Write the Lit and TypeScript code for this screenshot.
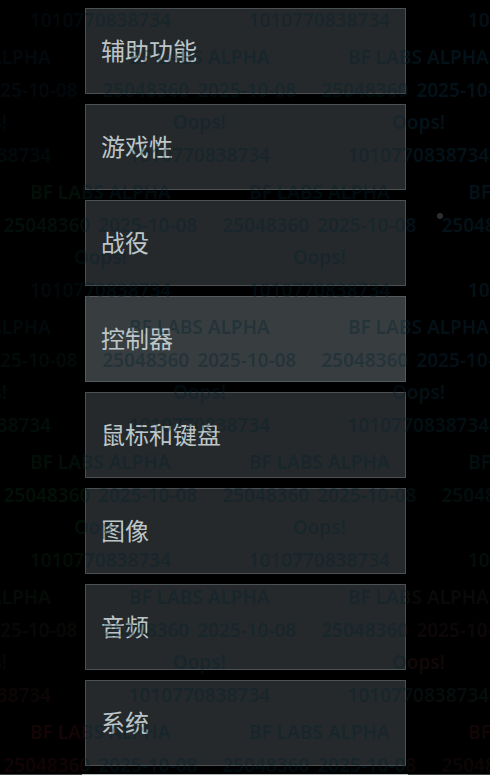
import { LitElement, html, css } from "lit";
import { customElement } from "lit/decorators.js";

const ITEMS = ["辅助功能", "游戏性", "战役", "控制器", "鼠标和键盘", "图像", "音频", "系统"];
const ACTIVE = "控制器";
// Watermark rows: alternate between two horizontal offsets, four tiles each.
const ROWS = [0, 1, 2, 3, 4, 5, 6, 7];

@customElement("app-root")
export class AppRoot extends LitElement {
  static styles = css`
    :host {
      display: block;
      position: relative;
      width: 490px;
      height: 775px;
      overflow: hidden;
      background: #000;
      font-family: "Noto Sans", "Noto Sans CJK SC", sans-serif;
    }
    .menu {
      display: flex;
      flex-direction: column;
      gap: 10px;
      width: 321px;
      margin-left: 85px;
      padding-top: 8px;
    }
    .item {
      box-sizing: border-box;
      height: 86px;
      display: flex;
      align-items: center;
      padding: 0 0 3px 15px;
      background: #25292b;
      border: 1px solid #4b5052;
      color: #bcc6c9;
      font-family: "Noto Sans CJK SC", "Noto Sans", sans-serif;
      font-size: 24px;
    }
    .item.active {
      background: #383d40;
      border-color: #555a5c;
    }
    .rule {
      height: 1px;
      margin-top: 8px;
      background: linear-gradient(
        to right,
        #3c3f40 0 82px,
        #aeb8b8 82px 408px,
        #3c3f40 408px
      );
    }
    .watermark {
      position: absolute;
      inset: 0;
      overflow: hidden;
      pointer-events: none;
      color: transparent;
      filter: blur(0.4px);
      -webkit-background-clip: text;
      background-clip: text;
      background-repeat: no-repeat;
      background-image:
        linear-gradient(
          to bottom,
          #02080b 0,
          #02080b 150px,
          #021007 195px,
          #030e0a 230px,
          #02080b 295px,
          #021007 490px,
          #021005 530px,
          #030c07 570px,
          #0b0505 690px,
          #150406 730px,
          #100305 775px
        ),
        linear-gradient(rgba(0, 35, 45, 0.35), rgba(0, 35, 45, 0.35)),
        linear-gradient(
          to bottom,
          #030e17 0,
          #031219 60px,
          #031017 360px,
          #020e0d 495px,
          #030e0a 560px,
          #0d0707 628px,
          #130707 660px,
          #040e0d 695px,
          #120505 730px,
          #0b0505 775px
        );
      background-size: 85px 100%, 321px 100%, 84px 100%;
      background-position: 0 0, 85px 0, 406px 0;
      font-size: 19px;
      font-weight: 600;
      line-height: 32.5px;
      white-space: nowrap;
      text-align: center;
    }
    .rows {
      display: flex;
      flex-direction: column;
      gap: 5px;
      margin-top: -94px;
    }
    .row {
      display: flex;
      margin-left: -228px;
    }
    .row.shift {
      margin-left: -129px;
    }
    .tile {
      flex: none;
      width: 219px;
    }
    .tile div {
      height: 32.5px;
    }
    .tile .date {
      word-spacing: 3px;
    }
    .speck {
      position: absolute;
      left: 437px;
      top: 213px;
      width: 6px;
      height: 6px;
      border-radius: 50%;
      background: #2c2f30;
    }
  `;

  private tile() {
    return html`<div class="tile">
      <div>BF LABS ALPHA</div>
      <div class="date">25048360 2025-10-08</div>
      <div>Oops!</div>
      <div>1010770838734</div>
    </div>`;
  }

  render() {
    return html`
      <div class="menu">
        ${ITEMS.map(
          (label) =>
            html`<div class="item ${label === ACTIVE ? "active" : ""}">${label}</div>`
        )}
      </div>
      <div class="rule"></div>
      <div class="speck"></div>
      <div class="watermark">
        <div class="rows">
          ${ROWS.map(
            (r) =>
              html`<div class="row ${r % 2 ? "shift" : ""}">
                ${this.tile()}${this.tile()}${this.tile()}${this.tile()}
              </div>`
          )}
        </div>
      </div>
    `;
  }
}
